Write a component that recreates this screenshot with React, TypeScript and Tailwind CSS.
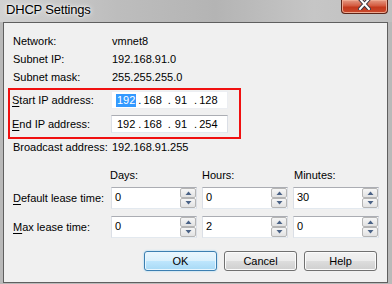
import React from 'react';

const font = { fontFamily: '"Liberation Sans", Arial, sans-serif' };

const Mn: React.FC<{ k: string; rest: string }> = ({ k, rest }) => (
    <span>
        <span className="underline underline-offset-[2px] decoration-[1px]">{k}</span>
        {rest}
    </span>
);

const SpinArrow: React.FC<{ up?: boolean }> = ({ up }) => (
    <svg width="7" height="4" viewBox="0 0 7 4">
        {up ? (
            <polygon points="0.5,4 3.5,0.5 6.5,4" fill="#4a6286" />
        ) : (
            <polygon points="0.5,0 3.5,3.5 6.5,0" fill="#4a6286" />
        )}
    </svg>
);

const SpinBox: React.FC<{ value: string }> = ({ value }) => (
    <div className="w-[86px] h-[22px] flex bg-white border border-[#dbdfe6] border-t-[#abadb3] border-b-[#e3e9ef]">
        <div className="flex-1 pl-[3px] pt-[2px] text-[11px] leading-[14px] text-black">{value}</div>
        <div className="w-[16px] flex flex-col">
            <div className="h-[10px] flex items-center justify-center border border-[#b5b5b5] rounded-[2px] bg-[linear-gradient(to_bottom,#f6f6f6,#e2e2e2)]">
                <SpinArrow up />
            </div>
            <div className="h-[10px] flex items-center justify-center border border-[#b5b5b5] rounded-[2px] bg-[linear-gradient(to_bottom,#f6f6f6,#e2e2e2)]">
                <SpinArrow />
            </div>
        </div>
    </div>
);

const IpBox: React.FC<{ parts: string[]; selectFirst?: boolean; framed?: boolean }> = ({ parts, selectFirst, framed }) => (
    <div
        className={`w-[117px] h-[18px] bg-white flex items-center text-[11px] leading-[13px] text-black border ${
            framed ? 'border-[#dbdfe6] border-t-[#abadb3] border-b-[#e3e9ef]' : 'border-[#eceef2]'
        }`}
    >
        <span className={`ml-[4px] px-[1px] ${selectFirst ? 'bg-[#3399ff] text-white' : ''}`}>{parts[0]}</span>
        <span className="ml-[2px]">.</span>
        <span className="ml-[2px]">{parts[1]}</span>
        <span className="ml-[6px]">.</span>
        <span className="ml-[4px]">{parts[2]}</span>
        <span className="ml-[7px]">.</span>
        <span className="ml-[2px]">{parts[3]}</span>
    </div>
);

const Button: React.FC<{ label: string; primary?: boolean }> = ({ label, primary }) => (
    <button
        className={`w-[73px] h-[20px] rounded-[3px] border text-[11px] leading-[14px] text-black ${
            primary
                ? 'border-[#3c7fb1] bg-[linear-gradient(to_bottom,#eaf6fd_0%,#d9f0fc_50%,#bee6fd_51%,#a7d9f5_100%)] shadow-[inset_0_0_0_1px_#e8f6fe,0_0_2px_#8fd1f5]'
                : 'border-[#707070] bg-[linear-gradient(to_bottom,#f2f2f2_0%,#ebebeb_50%,#dddddd_51%,#cfcfcf_100%)] shadow-[inset_0_0_0_1px_#fbfbfb]'
        }`}
    >
        {label}
    </button>
);

export default function App() {
    return (
        <div className="w-[392px] h-[284px] bg-[#b9b9b9] flex flex-col overflow-hidden" style={font}>
            {/* title bar */}
            <div className="h-[22px] flex items-start justify-between bg-[linear-gradient(to_right,#d2d2d2,#bdbdbd_30%,#b4b4b4_55%,#c6c6c6_80%,#c0c0c0)]">
                <span className="ml-[6px] mt-[1px] text-[13px] leading-[17px] tracking-[-0.2px] text-black [text-shadow:0_0_6px_#ffffff,0_0_3px_#ffffff]">
                    DHCP Settings
                </span>
                <div className="mr-[4px] w-[47px] h-[14px] rounded-b-[4px] border border-t-0 border-[#5b2418] bg-[linear-gradient(to_bottom,#e59a84_0%,#d35a3f_45%,#c4391c_55%,#c94a2e_100%)] shadow-[inset_0_0_0_1px_#eea890] flex items-start justify-center">
                    <svg width="13" height="10" viewBox="0 0 13 10">
                        <path d="M2 -1 L11 9 M11 -1 L2 9" stroke="#3a3440" strokeWidth="4" strokeLinecap="square" />
                        <path d="M2 -1 L11 9 M11 -1 L2 9" stroke="#ffffff" strokeWidth="2" strokeLinecap="square" />
                    </svg>
                </div>
            </div>

            {/* client area */}
            <div className="ml-[3px] w-[385px] h-[261px] border border-[#5f5f5f] bg-[#f0f0f0] text-[11px] text-black flex flex-col">
                <div className="pt-[9px] pl-[9px]">
                    <div className="h-[18px] flex items-center">
                        <span className="w-[99px]">Network:</span>
                        <span>vmnet8</span>
                    </div>
                    <div className="h-[18px] flex items-center">
                        <span className="w-[99px]">Subnet IP:</span>
                        <span>192.168.91.0</span>
                    </div>
                    <div className="h-[18px] flex items-center">
                        <span className="w-[99px]">Subnet mask:</span>
                        <span>255.255.255.0</span>
                    </div>
                </div>

                {/* red highlight frame */}
                <div className="mt-[2px] ml-[4px] w-[233px] h-[51px] border-2 border-[#f01010] pt-[1px] pl-[2px]">
                    <div className="h-[18px] flex items-center">
                        <span className="w-[99px]"><Mn k="S" rest="tart IP address:" /></span>
                        <IpBox parts={['192', '168', '91', '128']} selectFirst />
                    </div>
                    <div className="mt-[6px] h-[18px] flex items-center">
                        <span className="w-[99px]"><Mn k="E" rest="nd IP address:" /></span>
                        <IpBox parts={['192', '168', '91', '254']} framed />
                    </div>
                </div>

                <div className="pl-[9px] h-[17px] flex items-center">
                    <span className="w-[99px]">Broadcast address:</span>
                    <span>192.168.91.255</span>
                </div>

                <div className="mt-[11px] pl-[9px] h-[16px] flex items-center">
                    <span className="w-[97px]"></span>
                    <div className="flex gap-[6px]">
                        <span className="w-[86px]">Days:</span>
                        <span className="w-[86px]">Hours:</span>
                        <span className="w-[86px]">Minutes:</span>
                    </div>
                </div>

                <div className="mt-[4px] pl-[9px] flex items-center">
                    <span className="w-[98px]"><Mn k="D" rest="efault lease time:" /></span>
                    <div className="flex gap-[5px]">
                        <SpinBox value="0" />
                        <SpinBox value="0" />
                        <SpinBox value="30" />
                    </div>
                </div>

                <div className="mt-[7px] pl-[9px] flex items-center">
                    <span className="w-[98px]"><Mn k="M" rest="ax lease time:" /></span>
                    <div className="flex gap-[5px]">
                        <SpinBox value="0" />
                        <SpinBox value="2" />
                        <SpinBox value="0" />
                    </div>
                </div>

                <div className="mt-[13px] flex justify-end gap-[7px] pr-[10px]">
                    <Button label="OK" primary />
                    <Button label="Cancel" />
                    <Button label="Help" />
                </div>
            </div>
        </div>
    );
}
